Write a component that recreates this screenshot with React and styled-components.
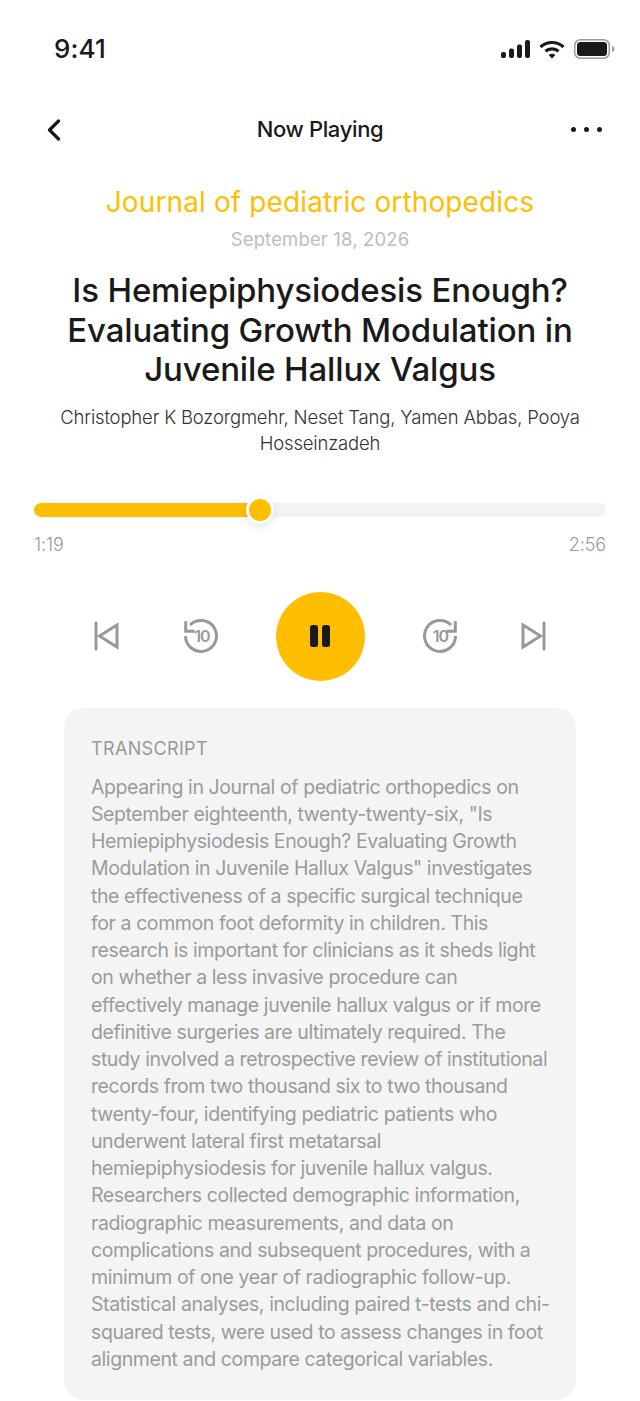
import React from 'react';
import styled, { createGlobalStyle } from 'styled-components';

const Global = createGlobalStyle`
  html, body { margin: 0; padding: 0; background: #fff; }
  body { font-family: Inter, "Liberation Sans", sans-serif; color: #1a1a1a; }
`;

const transcript = `Appearing in Journal of pediatric orthopedics on September eighteenth, twenty-twenty-six, "Is Hemiepiphysiodesis Enough? Evaluating Growth Modulation in Juvenile Hallux Valgus" investigates the effectiveness of a specific surgical technique for a common foot deformity in children. This research is important for clinicians as it sheds light on whether a less invasive procedure can effectively manage juvenile hallux valgus or if more definitive surgeries are ultimately required. The study involved a retrospective review of institutional records from two thousand six to two thousand twenty-four, identifying pediatric patients who underwent lateral first metatarsal hemiepiphysiodesis for juvenile hallux valgus. Researchers collected demographic information, radiographic measurements, and data on complications and subsequent procedures, with a minimum of one year of radiographic follow-up. Statistical analyses, including paired t-tests and chi-squared tests, were used to assess changes in foot alignment and compare categorical variables.`;

const App = () => (
  <>
    <Global />
    <Page>
      <StatusBar>
        <Time>9:41</Time>
        <StatusIcons>
          <svg width="29" height="18" viewBox="0 0 29 18" fill="#1a1a1a">
            <rect x="0" y="12" width="5" height="6" rx="2" />
            <rect x="8" y="8.5" width="5" height="9.5" rx="2" />
            <rect x="16" y="4.5" width="5" height="13.5" rx="2" />
            <rect x="24" y="0" width="5" height="18" rx="2" />
          </svg>
          <svg width="26" height="19" viewBox="0 0 26 19" fill="none" stroke="#1a1a1a" strokeWidth="3.2">
            <path d="M1.5 7 C8 1 18 1 24.5 7" />
            <path d="M6.5 11.2 C10 8 16 8 19.5 11.2" />
            <path d="M13 18.5 L9.6 15 C11.5 13.4 14.5 13.4 16.4 15 Z" fill="#1a1a1a" stroke="none" />
          </svg>
          <svg width="41" height="20" viewBox="0 0 41 20" fill="none">
            <rect x="0.75" y="0.75" width="34.5" height="18.5" rx="5.5" stroke="#9a9a9a" strokeWidth="1.5" />
            <rect x="3" y="3" width="30" height="14" rx="3.5" fill="#1a1a1a" />
            <path d="M38 7 C39.5 7.5 40.5 8.7 40.5 10 C40.5 11.3 39.5 12.5 38 13 Z" fill="#9a9a9a" />
          </svg>
        </StatusIcons>
      </StatusBar>

      <NavBar>
        <BackIcon width="16" height="22" viewBox="0 0 16 22" fill="none" stroke="#1a1a1a" strokeWidth="3.2" strokeLinecap="round" strokeLinejoin="round">
          <path d="M12.5 2 L3.5 11 L12.5 20" />
        </BackIcon>
        <NavTitle>Now Playing</NavTitle>
        <Dots>
          <Dot />
          <Dot />
          <Dot />
        </Dots>
      </NavBar>

      <Info>
        <Journal>Journal of pediatric orthopedics</Journal>
        <DateText>September 18, 2026</DateText>
        <Title>
          Is Hemiepiphysiodesis Enough? Evaluating Growth Modulation in Juvenile Hallux Valgus
        </Title>
        <Authors>Christopher K Bozorgmehr, Neset Tang, Yamen Abbas, Pooya Hosseinzadeh</Authors>
      </Info>

      <Progress>
        <Track>
          <Fill style={{ width: `${(225.5 / 572) * 100}%` }}>
            <Knob />
          </Fill>
        </Track>
        <Times>
          <span>1:19</span>
          <span>2:56</span>
        </Times>
      </Progress>

      <Controls>
        <svg width="28" height="30" viewBox="0 0 28 30" fill="none" stroke="#999" strokeWidth="3" strokeLinecap="round" strokeLinejoin="miter">
          <path d="M4 2 V28" />
          <path d="M25 4 L7.5 15 L25 26 Z" />
        </svg>
        <TransportGroup>
          <svg width="36" height="36" viewBox="0 0 36 36" fill="none">
            <path d="M7 7 A15.5 15.5 0 1 1 2.5 18" stroke="#999" strokeWidth="3" />
            <path d="M2.7 3.3 V13.3 H11.7" stroke="#999" strokeWidth="3" />
            <SkipLabel x="19" y="23.8">10</SkipLabel>
          </svg>
          <PauseButton>
            <PauseBar />
            <PauseBar />
          </PauseButton>
          <svg width="36" height="36" viewBox="0 0 36 36" fill="none">
            <path d="M29 7 A15.5 15.5 0 1 0 33.5 18" stroke="#999" strokeWidth="3" />
            <path d="M33.3 3.3 V13.3 H24.3" stroke="#999" strokeWidth="3" />
            <SkipLabel x="18.5" y="23.8">10</SkipLabel>
          </svg>
        </TransportGroup>
        <svg width="28" height="30" viewBox="0 0 28 30" fill="none" stroke="#999" strokeWidth="3" strokeLinecap="round" strokeLinejoin="miter">
          <path d="M24 2 V28" />
          <path d="M3 4 L20.5 15 L3 26 Z" />
        </svg>
      </Controls>

      <Card>
        <CardHeading>TRANSCRIPT</CardHeading>
        <CardBody>{transcript}</CardBody>
      </Card>
    </Page>
  </>
);

export default App;

const Page = styled.div`
  width: 640px;
  height: 1401px;
  overflow: hidden;
  background: #fff;
`;

const StatusBar = styled.div`
  height: 98px;
  box-sizing: border-box;
  padding: 32px 25px 0 54px;
  display: flex;
  justify-content: space-between;
  align-items: flex-start;
`;

const Time = styled.div`
  font-size: 26px;
  line-height: 34px;
  font-weight: 500;
  letter-spacing: 0.1px;
`;

const StatusIcons = styled.div`
  display: flex;
  align-items: center;
  gap: 9px;
  height: 34px;
`;

const NavBar = styled.div`
  height: 62px;
  box-sizing: border-box;
  padding: 0 38px;
  display: grid;
  grid-template-columns: 1fr auto 1fr;
  align-items: center;
`;

const BackIcon = styled.svg`
  margin: 2px 0 0 8px;
`;

const NavTitle = styled.div`
  font-size: 22px;
  font-weight: 500;
  letter-spacing: -0.35px;
`;

const Dots = styled.div`
  display: flex;
  gap: 8px;
  justify-self: end;
`;

const Dot = styled.span`
  width: 5px;
  height: 5px;
  border-radius: 50%;
  background: #1a1a1a;
`;

const Info = styled.div`
  padding: 0 32px;
  text-align: center;
`;

const Journal = styled.div`
  margin-top: 24px;
  font-size: 28px;
  line-height: 36px;
  color: #ffbe00;
  letter-spacing: 0.12px;
`;

const DateText = styled.div`
  margin-top: 7px;
  font-size: 18.5px;
  line-height: 24px;
  color: #bdbdbd;
  letter-spacing: 0.15px;
`;

const Title = styled.h1`
  margin: 20px 0 0;
  font-size: 33px;
  line-height: 39.5px;
  font-weight: 500;
  letter-spacing: -0.15px;
`;

const Authors = styled.div`
  margin: 14px auto 0;
  width: 540px;
  font-size: 18.5px;
  line-height: 26px;
  font-weight: 300;
  letter-spacing: -0.17px;
  color: #333;
`;

const Progress = styled.div`
  margin-top: 47px;
  padding: 0 34px;
`;

const Track = styled.div`
  height: 14px;
  border-radius: 7px;
  background: #f3f3f3;
`;

const Fill = styled.div`
  position: relative;
  height: 100%;
  border-radius: 7px;
  background: #ffbe00;
`;

const Knob = styled.div`
  position: absolute;
  right: -14px;
  top: -7px;
  width: 28px;
  height: 28px;
  box-sizing: border-box;
  border-radius: 50%;
  background: #ffbe00;
  border: 3px solid #fff;
  box-shadow: 0 3px 8px rgba(0, 0, 0, 0.1);
`;

const Times = styled.div`
  display: flex;
  justify-content: space-between;
  margin-top: 16px;
  font-size: 18px;
  line-height: 24px;
  font-weight: 300;
  letter-spacing: -0.1px;
  color: #999;
`;

const Controls = styled.div`
  margin-top: 35px;
  padding: 0 92px;
  height: 89px;
  display: flex;
  justify-content: space-between;
  align-items: center;
`;

const TransportGroup = styled.div`
  display: flex;
  align-items: center;
  gap: 57px;
`;

const SkipLabel = styled.text`
  font-family: Inter, sans-serif;
  font-size: 16px;
  font-weight: 600;
  fill: #999;
  text-anchor: middle;
  letter-spacing: -0.8px;
`;

const PauseButton = styled.div`
  width: 89px;
  height: 89px;
  border-radius: 50%;
  background: #ffbe00;
  display: flex;
  align-items: center;
  justify-content: center;
  gap: 4px;
`;

const PauseBar = styled.span`
  width: 8px;
  height: 22px;
  border-radius: 2.5px;
  background: #1a1a1a;
`;

const Card = styled.div`
  margin: 27px 64px 0;
  height: 692px;
  box-sizing: border-box;
  padding: 28px 25px 0 27px;
  border-radius: 20px;
  background: #f4f4f4;
`;

const CardHeading = styled.div`
  font-size: 18px;
  line-height: 26px;
  color: #999;
  letter-spacing: 0.35px;
`;

const CardBody = styled.p`
  margin: 12px 0 0;
  font-size: 19.5px;
  line-height: 27.25px;
  color: #9b9b9b;
  letter-spacing: -0.41px;
`;
